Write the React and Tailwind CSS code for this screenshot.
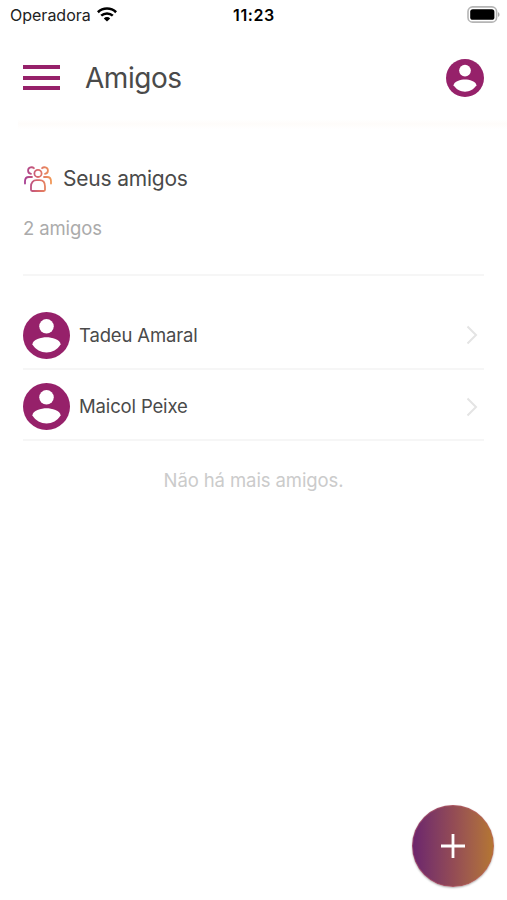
const friends = [
  { id: 1, name: 'Tadeu Amaral', row: 'h-[70px] pt-[2px]' },
  { id: 2, name: 'Maicol Peixe', row: 'h-[71px] pt-[4px]' },
]

function Avatar({ className }) {
  return (
    <svg viewBox="0 0 46 46" className={className} aria-hidden="true">
      <circle cx="23" cy="23" r="23" fill="#96216a" />
      <circle cx="23" cy="14" r="7.1" fill="#fff" />
      <path
        d="M9.2 31.8C9.2 27 18 24.8 23 24.8s13.8 2.200 13.8 7C33.600 36.900 28.500 39.600 23 39.600S12.400 36.900 9.200 31.800z"
        fill="#fff"
      />
    </svg>
  )
}

function WifiIcon() {
  return (
    <svg viewBox="0 0 20 15" className="-mt-[2px] ml-[6px] h-[15px] w-5" fill="none" stroke="#000" aria-hidden="true">
      <path d="M.9 5.200a13.200 13.200 0 0 1 18.200 0" strokeWidth="2.600" />
      <path d="M4.200 8.700a8.400 8.400 0 0 1 11.600 0" strokeWidth="2.500" />
      <path d="M10 14.600 6.800 11.400a4.600 4.600 0 0 1 6.400 0z" fill="#000" stroke="none" />
    </svg>
  )
}

function BatteryIcon() {
  return (
    <svg viewBox="0 0 33 17" className="-mt-[2px] h-[17px] w-[33px]" aria-hidden="true">
      <rect x="1" y=".9" width="28.600" height="15.200" rx="4.700" fill="#fff" stroke="#b5b5b5" strokeWidth="1.600" />
      <rect x="3.200" y="3.200" width="24.200" height="10.600" rx="2.600" fill="#000" />
      <path d="M31 6.200c2 .6 2 4 0 4.600z" fill="#aaa" />
    </svg>
  )
}

function FriendsIcon() {
  return (
    <svg viewBox="0 0 28 26" className="mt-px ml-px h-[26px] w-7" fill="none" aria-hidden="true">
      <defs>
        <linearGradient id="friends" gradientUnits="userSpaceOnUse" x1="0" y1="0" x2="28" y2="0">
          <stop offset="0" stopColor="#a33a94" />
          <stop offset=".5" stopColor="#d96a6c" />
          <stop offset="1" stopColor="#f29a55" />
        </linearGradient>
      </defs>
      <g stroke="url(#friends)" strokeWidth="1.800" strokeLinecap="round" strokeLinejoin="round">
        <circle cx="14" cy="7.400" r="3.600" />
        <path d="M7 23.800v-3.300c0-4 2.300-6.300 5.500-6.300h3c3.200 0 5.500 2.300 5.500 6.300v3.300c0 .8-.4 1.200-1.200 1.200H8.200c-.8 0-1.200-.4-1.200-1.200z" />
        <path d="M9.900 2.200C8.400.600 4.300 1 4.100 4.300c-.1 1.700 1 3.200 2.900 3.500" />
        <path d="M18.100 2.200c1.500-1.600 5.600-1.200 5.800 2.100.1 1.700-1 3.200-2.900 3.500" />
        <path d="M1 17.600v-2.300c0-2.700 1.500-4.300 4-4.300h3" />
        <path d="M27 17.600v-2.300c0-2.700-1.500-4.300-4-4.300h-3" />
      </g>
    </svg>
  )
}

function StatusBar() {
  return (
    <div className="grid h-[30px] grid-cols-3 items-center pl-[10px] pr-[7px]">
      <div className="flex items-center text-base leading-none text-[#222]">
        <span>Operadora</span>
        <WifiIcon />
      </div>
      <span className="pr-[2px] text-center text-base leading-none font-semibold tracking-[0.6px] text-black">11:23</span>
      <div className="flex justify-end">
        <BatteryIcon />
      </div>
    </div>
  )
}

function Header() {
  return (
    <header className="flex h-[95px] items-center px-[23px]">
      <button type="button" className="flex w-[37px] flex-col gap-[6.500px]" aria-label="Menu">
        <span className="h-1 w-full bg-[#96216a]" />
        <span className="h-1 w-full bg-[#96216a]" />
        <span className="h-1 w-full bg-[#96216a]" />
      </button>
      <h1 className="ml-[25px] text-[28px] leading-none tracking-[-0.45px] text-[#4a4a4a]">Amigos</h1>
      <Avatar className="ml-auto h-[38px] w-[38px]" />
    </header>
  )
}

export default function App() {
  return (
    <div className="relative h-[900px] w-[507px] overflow-hidden bg-white font-['Inter','Liberation_Sans',sans-serif]">
      <StatusBar />
      <Header />
      <div className="ml-[18px] -mt-[6px] h-[10px] bg-linear-to-b from-white via-[#fefcfa] to-white" />
      <main className="px-[23px]">
        <section className="h-[147px] border-b-2 border-[#f6f6f6] pt-[35px]">
          <div className="flex items-center">
            <FriendsIcon />
            <h2 className="mt-[2px] ml-[11px] text-[21px] leading-[26px] tracking-[-0.2px] text-[#4a4a4a]">Seus amigos</h2>
          </div>
          <p className="mt-6 text-[18.500px] leading-6 tracking-[-0.12px] text-[#ababab]">2 amigos</p>
        </section>

        <ul className="pt-6">
          {friends.map((friend) => (
            <li key={friend.id} className={`flex items-center border-b-2 border-[#f6f6f6] ${friend.row}`}>
              <Avatar className="h-[47px] w-[47px]" />
              <span className="-mt-px ml-[9px] text-[18.500px] leading-6 tracking-[-0.15px] text-[#4a4a4a]">{friend.name}</span>
              <svg viewBox="0 0 12 20" className="mr-[6px] ml-auto h-5 w-3" fill="none" aria-hidden="true">
                <path d="m1.500 1.500 8.500 8.500-8.500 8.500" stroke="#e4e4e4" strokeWidth="2" />
              </svg>
            </li>
          ))}
        </ul>

        <p className="mt-[27px] text-center text-[18.500px] leading-6 tracking-[-0.1px] text-[#cbcbcb]">
          Não há mais amigos.
        </p>
      </main>

      <button
        type="button"
        className="absolute right-[13px] bottom-[13px] flex h-[82px] w-[82px] items-center justify-center rounded-full border border-[#c0606c]/50 bg-linear-to-r from-[#6b236d] via-[#934b55] to-[#b5772f] bg-origin-border shadow-[0_1px_2px_rgba(0,0,0,0.3)]"
        aria-label="Adicionar amigo"
      >
        <svg viewBox="0 0 24 24" className="h-6 w-6" aria-hidden="true">
          <path d="M12 0v24M0 12h24" stroke="#fff" strokeWidth="2.800" />
        </svg>
      </button>
    </div>
  )
}
